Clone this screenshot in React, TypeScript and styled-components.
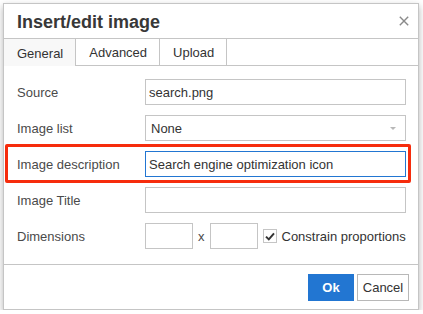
import * as React from 'react'
import styled, { createGlobalStyle } from 'styled-components'

const GlobalStyle = createGlobalStyle`
  html, body {
    margin: 0;
    background: #fff;
    font-family: 'Liberation Sans', Arial, sans-serif;
  }
`

const Page = styled.div`
  padding: 3px 0 0 3px;
`

const Dialog = styled.div`
  width: 416px;
  box-sizing: border-box;
  border: 1px solid #c5c5c5;
  background: #fff;
  box-shadow: 0 3px 7px rgba(0, 0, 0, 0.3);
`

const Header = styled.div`
  height: 34px;
  display: flex;
  align-items: center;
  justify-content: space-between;
  padding: 0 9px 0 13px;
  border-bottom: 1px solid #c5c5c5;
`

const Title = styled.div`
  font-size: 18px;
  line-height: 18px;
  font-weight: bold;
  color: #383838;
  padding-top: 2px;
`

const Close = styled.svg`
  width: 10px;
  height: 10px;
  display: block;
`

const Tabs = styled.div`
  display: flex;
  height: 26px;
  border-bottom: 1px solid #c5c5c5;
`

const Tab = styled.div<{ $active?: boolean }>`
  display: flex;
  align-items: center;
  padding: 1px 12px 0 13px;
  border-right: 1px solid #c5c5c5;
  font-size: 13px;
  color: #333;
  background: ${p => (p.$active ? '#f8f8f8' : '#fff')};
  height: ${p => (p.$active ? '27px' : '26px')};
  margin-bottom: ${p => (p.$active ? '-1px' : '0')};
  box-sizing: border-box;
`

const Body = styled.div`
  display: flex;
  flex-direction: column;
  gap: 10px;
  padding: 13px 12px 15px 13px;
`

const Row = styled.div`
  position: relative;
  display: flex;
  align-items: center;
  height: 26px;
`

const Label = styled.div`
  width: 128px;
  flex: none;
  font-size: 13px;
  color: #4a4a4a;
`

const Input = styled.input<{ $focused?: boolean; $width?: number }>`
  width: ${p => p.$width ?? 261}px;
  height: 26px;
  box-sizing: border-box;
  margin: 0;
  border: 1px solid ${p => (p.$focused ? '#2276d2' : '#c5c5c5')};
  border-radius: 0;
  padding: 0 3px;
  font-family: 'Liberation Sans', Arial, sans-serif;
  font-size: 13px;
  color: #333;
  outline: none;
  background: #fff;
`

const Select = styled.div`
  width: 261px;
  height: 26px;
  box-sizing: border-box;
  border: 1px solid #c5c5c5;
  display: flex;
  align-items: center;
  padding: 0 9px 0 5px;
  font-size: 13px;
  color: #333;
`

const Caret = styled.span`
  margin-left: auto;
  width: 0;
  height: 0;
  border-left: 3px solid transparent;
  border-right: 3px solid transparent;
  border-top: 3px solid #b8b8b8;
`

const Highlight = styled.div`
  position: absolute;
  top: -7px;
  bottom: -6px;
  left: -12px;
  right: -5px;
  border: 3px solid #f62c0c;
  border-radius: 2px;
  pointer-events: none;
`

const Times = styled.span`
  margin: 0 5px;
  font-size: 13px;
  color: #4a4a4a;
`

const Check = styled.div`
  width: 14px;
  height: 14px;
  box-sizing: border-box;
  border: 1px solid #c5c5c5;
  margin-left: 5px;
  display: flex;
  align-items: center;
  justify-content: center;
`

const CheckText = styled.span`
  margin-left: 5px;
  font-size: 13px;
  color: #333;
`

const Footer = styled.div`
  height: 45px;
  display: flex;
  justify-content: flex-end;
  align-items: flex-start;
  gap: 3px;
  padding: 9px 9px 0 0;
  box-sizing: border-box;
  border-top: 1px solid #c5c5c5;
`

const Button = styled.div<{ $primary?: boolean; $width: number }>`
  width: ${p => p.$width}px;
  height: 27px;
  box-sizing: border-box;
  display: flex;
  align-items: center;
  justify-content: center;
  font-size: 13px;
  font-weight: ${p => (p.$primary ? 'bold' : 'normal')};
  color: ${p => (p.$primary ? '#fff' : '#333')};
  background: ${p => (p.$primary ? '#2276d2' : '#fff')};
  border: 1px solid ${p => (p.$primary ? '#2276d2' : '#b8b8b8')};
`

const fields = [
  { label: 'Source', value: 'search.png' },
  { label: 'Image list', select: 'None' },
  { label: 'Image description', value: 'Search engine optimization icon', focused: true },
  { label: 'Image Title', value: '' },
]

export default function App() {
  return (
    <Page>
      <GlobalStyle />
      <Dialog>
        <Header>
          <Title>Insert/edit image</Title>
          <Close viewBox="0 0 10 10">
            <path d="M0.8 0.8 L9.2 9.2 M9.2 0.8 L0.8 9.2" stroke="#8a8a8a" strokeWidth="1.4" />
          </Close>
        </Header>
        <Tabs>
          <Tab $active>General</Tab>
          <Tab>Advanced</Tab>
          <Tab>Upload</Tab>
        </Tabs>
        <Body>
          {fields.map(f => (
            <Row key={f.label}>
              <Label>{f.label}</Label>
              {f.select ? (
                <Select>
                  {f.select}
                  <Caret />
                </Select>
              ) : (
                <Input readOnly defaultValue={f.value} $focused={f.focused} />
              )}
              {f.focused && <Highlight />}
            </Row>
          ))}
          <Row>
            <Label>Dimensions</Label>
            <Input readOnly defaultValue="" $width={48} />
            <Times>x</Times>
            <Input readOnly defaultValue="" $width={48} />
            <Check>
              <svg width="10" height="9" viewBox="0 0 10 9">
                <path d="M1 4.6 L3.8 7.4 L9 1.4" stroke="#333" strokeWidth="2" fill="none" />
              </svg>
            </Check>
            <CheckText>Constrain proportions</CheckText>
          </Row>
        </Body>
        <Footer>
          <Button $primary $width={46}>Ok</Button>
          <Button $width={52}>Cancel</Button>
        </Footer>
      </Dialog>
    </Page>
  )
}
